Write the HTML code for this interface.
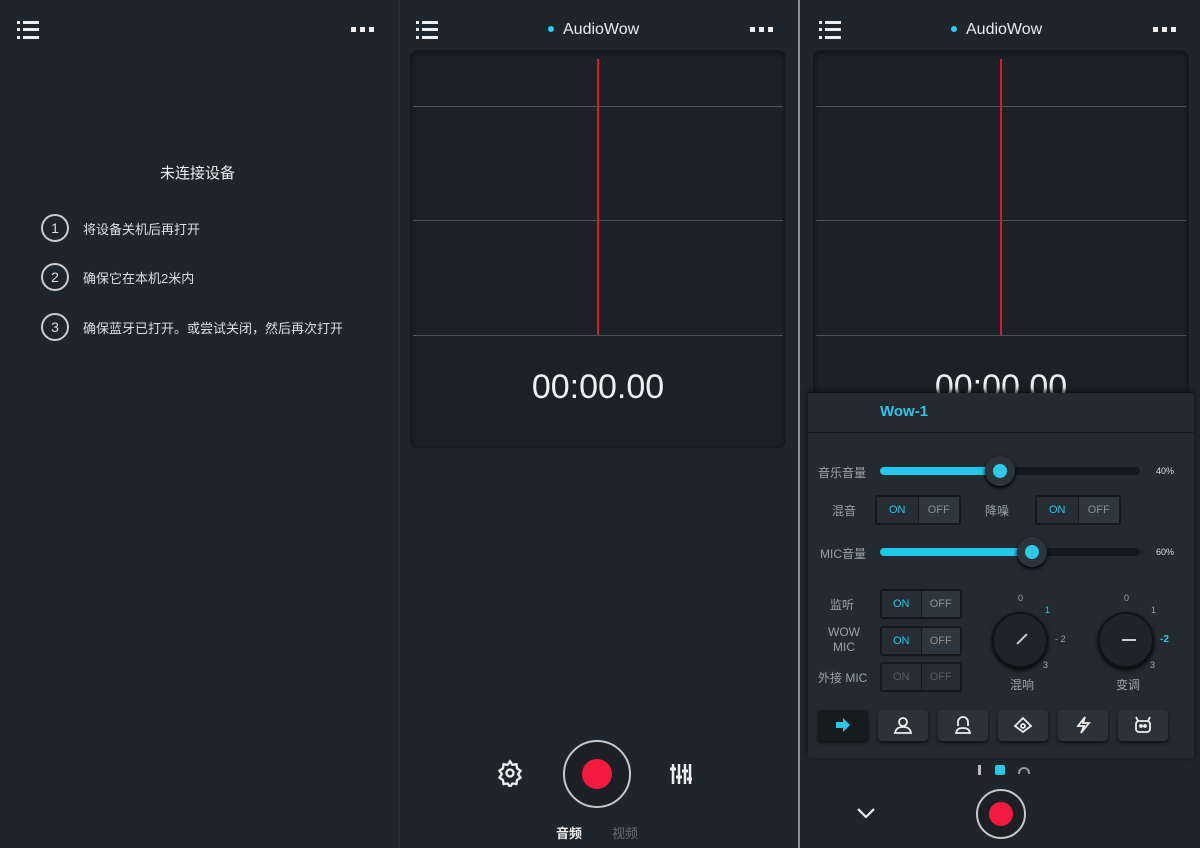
<!DOCTYPE html>
<html><head><meta charset="utf-8"><style>
*{margin:0;padding:0;box-sizing:border-box}
body{width:1200px;height:848px;background:#1e252b;position:relative;overflow:hidden;font-family:"Liberation Sans","Noto Sans CJK SC",sans-serif;color:#e8ecef}
.a{position:absolute}
.sep{position:absolute;top:0;width:2px;height:848px;background:#8a9096}
.menu{position:absolute;width:22px;height:18px}
.menu i{position:absolute;left:0;width:3px;height:2.5px;background:#eee}
.menu b{position:absolute;left:6px;width:16px;height:2.5px;background:#eee}
.dots{position:absolute;display:flex;gap:4px;height:5px}
.dots span{display:block;width:5px;height:5px;background:#eee}
.title{position:absolute;font-size:16px;color:#e8ecef}
.title:before{content:"";display:inline-block;width:6px;height:6px;border-radius:3px;background:#25d0ef;margin-right:9px;vertical-align:middle;position:relative;top:-1px}
.box{position:absolute;background:#1b2126;border:1px solid #141a1e;border-radius:8px;box-shadow:0 2px 4px #111 inset}
.hl{position:absolute;height:1px;background:#4b5459}
.red{position:absolute;width:2px;background:#e0182c}
.circ{position:absolute;width:28px;height:28px;border:2px solid #ccc;border-radius:50%;font-size:14px;text-align:center;line-height:24px;color:#ddd}
.step{position:absolute;font-size:13px;color:#dde}
.lbl{position:absolute;font-size:12px;color:#9aa3a8}
.track{position:absolute;height:8px;border-radius:4px;background:#15191c}
.fill{position:absolute;height:8px;border-radius:4px;background:#22c8ea}
.knob{position:absolute;width:30px;height:30px;border-radius:50%;background:#2c343a;box-shadow:0 2px 4px #000}
.knob:after{content:"";position:absolute;left:8px;top:8px;width:14px;height:14px;border-radius:50%;background:#2bcbeb}
.tg{position:absolute;width:86px;height:30px;border-radius:3px;background:#15191c;padding:2px;display:flex}
.tg div{flex:1;background:#2e373d;font-size:11px;text-align:center;line-height:26px;color:#8a9196}
.tg div:first-child{color:#2bc6e8;background:#262e33;margin-right:1px}
.tg.dis div{color:#555c60;background:#262d32}
.dial{position:absolute;width:56px;height:56px;border-radius:50%;background:#1e2428;border:2px solid #101417;box-shadow:0 2px 4px #000}
.btn{position:absolute;top:710px;width:50px;height:31px;border-radius:4px;background:#2b3338;box-shadow:0 2px 3px #111}
.btn svg{position:absolute;left:15px;top:6px}
</style></head><body>
<div class="sep" style="left:398px;background:#2a3136"></div>
<div class="sep" style="left:798px"></div>

<!-- LEFT -->
<div class="menu" style="left:17px;top:21px"><i style="top:0"></i><b style="top:0"></b><i style="top:7px"></i><b style="top:7px"></b><i style="top:15px"></i><b style="top:15px"></b></div>
<div class="dots" style="left:351px;top:27px"><span></span><span></span><span></span></div>
<div class="a" style="left:160px;top:162px;font-size:15px;color:#eee">未连接设备</div>
<div class="circ" style="left:41px;top:214px">1</div><div class="step" style="left:83px;top:219px">将设备关机后再打开</div>
<div class="circ" style="left:41px;top:263px">2</div><div class="step" style="left:83px;top:268px">确保它在本机2米内</div>
<div class="circ" style="left:41px;top:313px">3</div><div class="step" style="left:83px;top:318px">确保蓝牙已打开。或尝试关闭，然后再次打开</div>

<!-- MIDDLE -->
<div class="menu" style="left:416px;top:21px"><i style="top:0"></i><b style="top:0"></b><i style="top:7px"></i><b style="top:7px"></b><i style="top:15px"></i><b style="top:15px"></b></div>
<div class="title" style="left:548px;top:21px">AudioWow</div>
<div class="dots" style="left:750px;top:27px"><span></span><span></span><span></span></div>
<div class="box" style="left:410px;top:50px;width:376px;height:398px"></div>
<div class="hl" style="left:413px;top:106px;width:370px"></div>
<div class="hl" style="left:413px;top:220px;width:370px"></div>
<div class="hl" style="left:413px;top:335px;width:370px"></div>
<div class="red" style="left:597px;top:59px;height:276px"></div>
<div class="a" style="left:410px;width:376px;top:368px;text-align:center;font-size:34px;color:#f0f0f0">00:00.00</div>
<svg class="a" style="left:496px;top:759px" width="28" height="28" viewBox="0 0 24 24" fill="none" stroke="#eee" stroke-width="2"><path d="M12 2l2 3 3.5-.5.5 3.5 3 2-2 3 2 3-3 2-.5 3.5-3.5-.5-2 3-2-3-3.5.5L6 18l-3-2 2-3-2-3 3-2 .5-3.5 3.5.5z"/><circle cx="12" cy="12" r="3"/></svg>
<div class="a" style="left:563px;top:740px;width:68px;height:68px;border-radius:50%;border:2px solid #c8c8c8;background:#1a2024"></div>
<div class="a" style="left:582px;top:759px;width:30px;height:30px;border-radius:50%;background:#f5183f"></div>
<svg class="a" style="left:670px;top:763px" width="22" height="22" viewBox="0 0 22 22" stroke="#eee" stroke-width="2.5"><path d="M3 1v20M9 1v20M15 1v20M20 1v20"/><path d="M0 6h6M6 14h6M12 8h6M17 16h5" stroke-width="3"/></svg>
<div class="a" style="left:556px;top:823px;font-size:13px;color:#eee;font-weight:bold">音频</div>
<div class="a" style="left:612px;top:823px;font-size:13px;color:#666d72">视频</div>

<!-- RIGHT -->
<div class="menu" style="left:819px;top:21px"><i style="top:0"></i><b style="top:0"></b><i style="top:7px"></i><b style="top:7px"></b><i style="top:15px"></i><b style="top:15px"></b></div>
<div class="title" style="left:951px;top:21px">AudioWow</div>
<div class="dots" style="left:1153px;top:27px"><span></span><span></span><span></span></div>
<div class="box" style="left:813px;top:50px;width:376px;height:380px"></div>
<div class="hl" style="left:816px;top:106px;width:370px"></div>
<div class="hl" style="left:816px;top:220px;width:370px"></div>
<div class="hl" style="left:816px;top:335px;width:370px"></div>
<div class="red" style="left:1000px;top:59px;height:276px"></div>
<div class="a" style="left:813px;width:376px;top:368px;text-align:center;font-size:34px;color:#f0f0f0;height:25px;overflow:hidden">00:00.00</div>

<div class="a" style="left:808px;top:393px;width:386px;height:365px;background:#232b31;border-radius:3px;box-shadow:0 -2px 6px #111"></div>
<div class="a" style="left:808px;top:432px;width:386px;height:1px;background:#15191c"></div>
<div class="a" style="left:880px;top:403px;font-size:15px;font-weight:bold;color:#2ec5e8">Wow-1</div>

<div class="lbl" style="left:818px;top:464px">音乐音量</div>
<div class="track" style="left:880px;top:467px;width:260px"></div>
<div class="fill" style="left:880px;top:467px;width:120px"></div>
<div class="knob" style="left:985px;top:456px"></div>
<div class="lbl" style="left:1156px;top:466px;font-size:9px;color:#ddd">40%</div>

<div class="lbl" style="left:832px;top:502px">混音</div>
<div class="tg" style="left:875px;top:495px"><div>ON</div><div>OFF</div></div>
<div class="lbl" style="left:985px;top:502px">降噪</div>
<div class="tg" style="left:1035px;top:495px"><div>ON</div><div>OFF</div></div>

<div class="lbl" style="left:820px;top:545px">MIC音量</div>
<div class="track" style="left:880px;top:548px;width:260px"></div>
<div class="fill" style="left:880px;top:548px;width:152px"></div>
<div class="knob" style="left:1017px;top:537px"></div>
<div class="lbl" style="left:1156px;top:547px;font-size:9px;color:#ddd">60%</div>

<div class="lbl" style="left:830px;top:596px">监听</div>
<div class="tg" style="left:880px;top:589px;width:82px"><div>ON</div><div>OFF</div></div>
<div class="lbl" style="left:828px;top:625px;line-height:15px;text-align:center">WOW<br>MIC</div>
<div class="tg" style="left:880px;top:626px;width:82px"><div>ON</div><div>OFF</div></div>
<div class="lbl" style="left:818px;top:669px">外接 MIC</div>
<div class="tg dis" style="left:880px;top:662px;width:82px"><div>ON</div><div>OFF</div></div>

<div class="dial" style="left:992px;top:612px"><div class="a" style="left:21px;top:24px;width:14px;height:2px;background:#ccc;transform:rotate(-45deg)"></div></div>
<div class="lbl" style="left:1018px;top:593px;font-size:9px">0</div>
<div class="lbl" style="left:1045px;top:605px;font-size:9px;color:#2bc6e8">1</div>
<div class="lbl" style="left:1055px;top:634px;font-size:9px">- 2</div>
<div class="lbl" style="left:1043px;top:660px;font-size:9px">3</div>
<div class="lbl" style="left:1010px;top:676px">混响</div>
<div class="dial" style="left:1098px;top:612px"><div class="a" style="left:22px;top:25px;width:14px;height:2px;background:#ccc"></div></div>
<div class="lbl" style="left:1124px;top:593px;font-size:9px">0</div>
<div class="lbl" style="left:1151px;top:605px;font-size:9px">1</div>
<div class="lbl" style="left:1160px;top:634px;font-size:10px;color:#2bc6e8;font-weight:bold">-2</div>
<div class="lbl" style="left:1150px;top:660px;font-size:9px">3</div>
<div class="lbl" style="left:1116px;top:676px">变调</div>

<div class="btn" style="left:818px;background:#161b1e"><svg width="20" height="18" viewBox="0 0 20 18"><path d="M3 6h7V2l7 7-7 7v-4H3z" fill="#2bc6e8"/></svg></div>
<div class="btn" style="left:878px"><svg width="20" height="18" viewBox="0 0 20 18" fill="none" stroke="#eee" stroke-width="1.8"><circle cx="10" cy="6" r="4"/><path d="M2 17c1-5 4-6 8-6s7 1 8 6z"/></svg></div>
<div class="btn" style="left:938px"><svg width="20" height="18" viewBox="0 0 20 18" fill="none" stroke="#eee" stroke-width="1.8"><path d="M5 10V6a5 5 0 0 1 10 0v4"/><path d="M3 17c1-4 3-5 7-5s6 1 7 5z"/></svg></div>
<div class="btn" style="left:998px"><svg width="20" height="18" viewBox="0 0 20 18" fill="none" stroke="#eee" stroke-width="1.8"><path d="M2 10l8-8 8 8-8 6z"/><circle cx="10" cy="10" r="2"/></svg></div>
<div class="btn" style="left:1058px"><svg width="20" height="18" viewBox="0 0 20 18" fill="none" stroke="#eee" stroke-width="1.8"><path d="M12 1L5 10h6l-3 7 8-10h-6z"/></svg></div>
<div class="btn" style="left:1118px"><svg width="20" height="18" viewBox="0 0 20 18" fill="none" stroke="#eee" stroke-width="1.8"><rect x="3" y="5" width="14" height="11" rx="3"/><path d="M5 5L3 1M15 5l2-4"/><circle cx="8" cy="10" r="1" fill="#eee"/><circle cx="12" cy="10" r="1" fill="#eee"/></svg></div>

<div class="a" style="left:978px;top:765px;width:3px;height:10px;background:#bbb"></div>
<div class="a" style="left:995px;top:765px;width:10px;height:10px;border-radius:2px;background:#2bc6e8"></div>
<div class="a" style="left:1018px;top:767px;width:12px;height:7px;border:2px solid #999;border-bottom:none;border-radius:6px 6px 0 0"></div>
<svg class="a" style="left:856px;top:806px" width="20" height="14" viewBox="0 0 20 14" fill="none" stroke="#eee" stroke-width="2.2"><path d="M2 3l8 8 8-8"/></svg>
<div class="a" style="left:976px;top:789px;width:50px;height:50px;border-radius:50%;border:2px solid #c8c8c8;background:#1a2024"></div>
<div class="a" style="left:989px;top:802px;width:24px;height:24px;border-radius:50%;background:#f5183f"></div>
</body></html>
